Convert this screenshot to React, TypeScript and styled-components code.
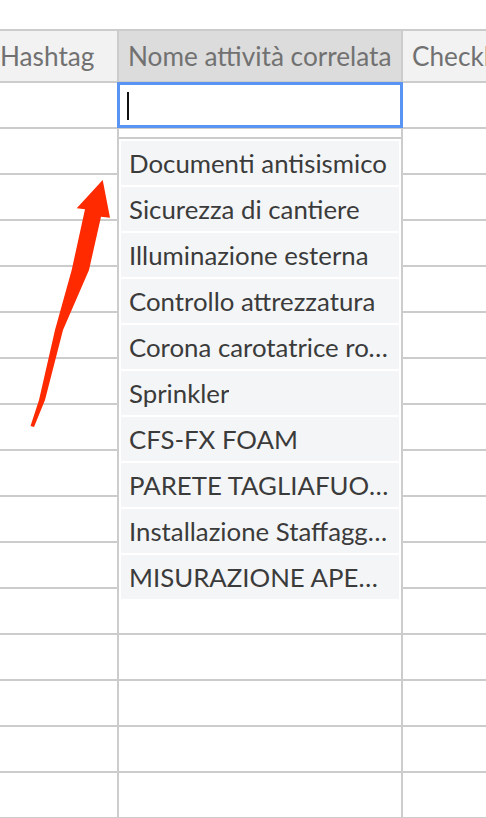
import React from 'react';
import styled, { createGlobalStyle } from 'styled-components';

const GlobalStyle = createGlobalStyle`
  html, body {
    margin: 0;
    padding: 0;
    background: #fff;
    font-family: Lato, "Open Sans", sans-serif;
  }
`;

const LINE = '#cccccc';

const Page = styled.div`
  position: relative;
  width: 486px;
  height: 818px;
  overflow: hidden;
  padding-top: 29px;
  box-sizing: border-box;
`;

const Table = styled.div`
  width: 560px;
`;

const Row = styled.div<{ $head?: boolean }>`
  display: grid;
  grid-template-columns: 119px 284px 1fr;
  height: ${(p) => (p.$head ? '54px' : '46px')};
  box-sizing: border-box;
  border-top: ${(p) => (p.$head ? `2px solid ${LINE}` : 'none')};
  border-bottom: 2px solid ${LINE};
`;

const HeadCell = styled.div<{ $active?: boolean; $pad?: number }>`
  display: flex;
  align-items: center;
  padding-left: ${(p) => p.$pad ?? 9}px;
  background: ${(p) => (p.$active ? '#dcdcdc' : '#f2f2f2')};
  border-right: 2px solid ${LINE};
  color: #717171;
  font-size: 26.2px;
  white-space: nowrap;
  overflow: hidden;
`;

const Cell = styled.div`
  border-right: 2px solid ${LINE};
  background: #fff;
`;

const Body = styled.div`
  position: relative;
`;

const Editor = styled.div`
  position: absolute;
  top: -1px;
  left: 117px;
  width: 286px;
  height: 46px;
  box-sizing: border-box;
  border: 3px solid #5a94f2;
  background: #fff;
  display: flex;
  align-items: center;
  padding-left: 7px;
`;

const Caret = styled.span`
  display: block;
  width: 2px;
  height: 28px;
  margin-top: 2px;
  background: #111;
`;

const Dropdown = styled.div`
  position: absolute;
  top: 54px;
  left: 117px;
  width: 286px;
  height: 498px;
  box-sizing: border-box;
  border: 2px solid ${LINE};
  background: #fff;
  padding: 2px;
  display: flex;
  flex-direction: column;
  gap: 2px;
`;

const Option = styled.div`
  height: 44px;
  flex: none;
  display: flex;
  align-items: center;
  padding: 0 9px 0 8px;
  background: #f4f5f7;
  color: #3b3b3b;
  font-size: 25.8px;
  min-width: 0;
`;

const OptionText = styled.span`
  white-space: nowrap;
  overflow: hidden;
  text-overflow: ellipsis;
`;

const ArrowLayer = styled.svg`
  position: absolute;
  top: 0;
  left: 0;
  pointer-events: none;
`;

const activities = [
  'Documenti antisismico',
  'Sicurezza di cantiere',
  'Illuminazione esterna',
  'Controllo attrezzatura',
  'Corona carotatrice rotante',
  'Sprinkler',
  'CFS-FX FOAM',
  'PARETE TAGLIAFUOCO',
  'Installazione Staffaggi sismici',
  'MISURAZIONE APERTURE',
];

const App: React.FC = () => {
  const rows = Array.from({ length: 16 });

  return (
    <>
      <GlobalStyle />
      <Page>
        <Table>
          <Row $head>
            <HeadCell $pad={0}>Hashtag</HeadCell>
            <HeadCell $active>Nome attività correlata</HeadCell>
            <HeadCell>Checklist</HeadCell>
          </Row>
          <Body>
            {rows.map((_, i) => (
              <Row key={i}>
                <Cell />
                <Cell />
                <Cell />
              </Row>
            ))}
            <Editor>
              <Caret />
            </Editor>
            <Dropdown>
              {activities.map((a) => (
                <Option key={a}>
                  <OptionText>{a}</OptionText>
                </Option>
              ))}
            </Dropdown>
          </Body>
        </Table>

        {/* red annotation arrow */}
        <ArrowLayer width="486" height="818" viewBox="0 0 486 818">
          <polygon
            fill="#ff2a00"
            points="102.7,180 110,217.7 101,216.7 89,270 63,330 45,400 34,427 30.5,426 39,400 55,330 71.7,270 85,209.3 76.7,208.3"
          />
        </ArrowLayer>
      </Page>
    </>
  );
};

export default App;
